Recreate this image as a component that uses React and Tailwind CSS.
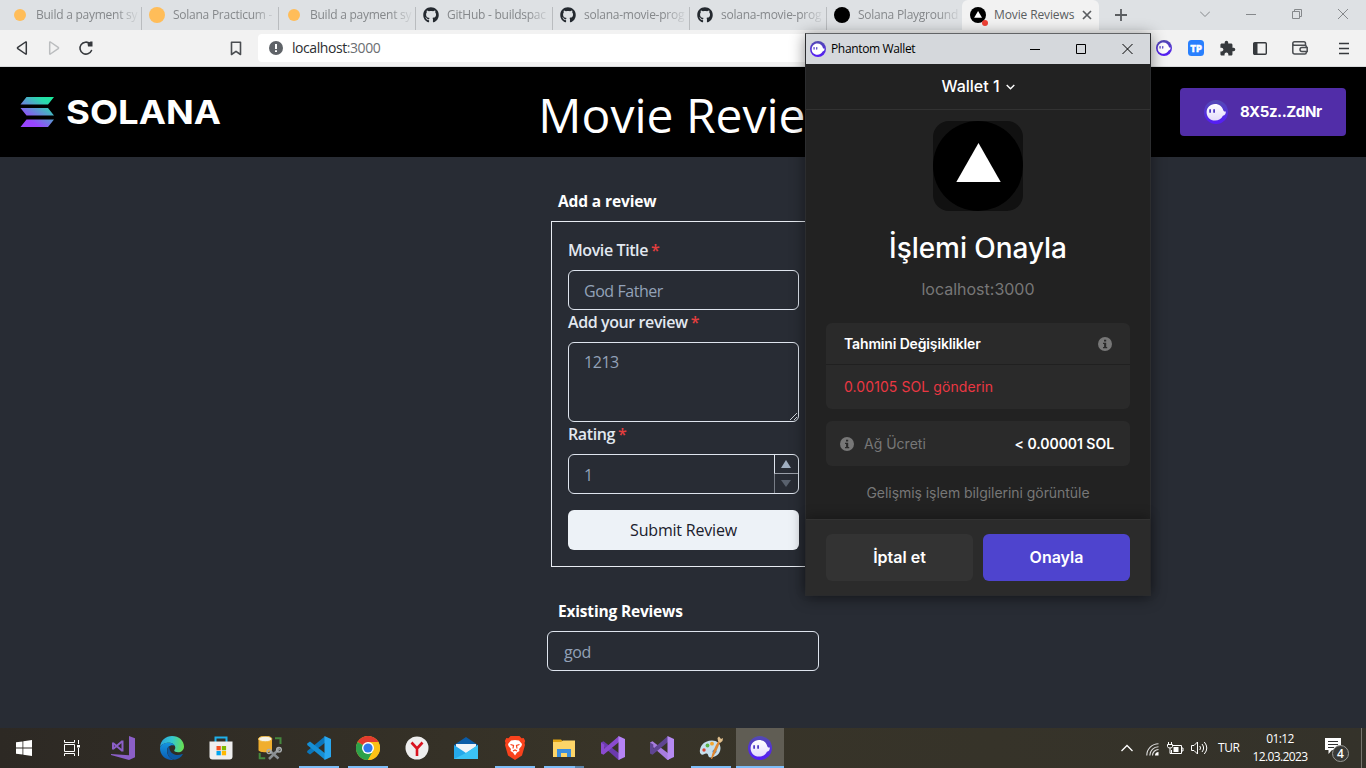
import React from "react";
import { FaGithub } from "react-icons/fa";
import { MdExtension } from "react-icons/md";

const SEG = "font-['Open_Sans','Noto_Sans',sans-serif]";

function Ghost({ size, id, flat }) {
  return (
    <svg width={size} height={size} viewBox="0 0 24 24" className="shrink-0">
      <defs>
        <linearGradient id={id} x1="0" y1="0" x2="0" y2="1">
          <stop offset="0" stopColor="#534bb1" />
          <stop offset="1" stopColor="#551bf9" />
        </linearGradient>
        <linearGradient id={id + "w"} x1="0" y1="0" x2="0" y2="1">
          <stop offset="0" stopColor="#fff" />
          <stop offset="1" stopColor={flat ? "#e4dcfb" : "#fff"} />
        </linearGradient>
      </defs>
      <circle cx="12" cy="12" r="12" fill={`url(#${id})`} />
      <path
        d="M11 3.900c4.300 0 7.300 2.600 8.300 6.300.3 1 .8 1.300 2.500 1.200.2 2.200-.8 4-2.900 4.400-1.300 3-4.300 4.800-7.900 4.800-4.900 0-8.400-3.600-8.400-8.300S6.100 3.900 11 3.900Z"
        fill={`url(#${id}w)`}
      />
      <rect x="5.200" y="9" width="1.800" height="4" rx=".9" fill="#4e3bc4" />
      <rect x="9.200" y="9" width="1.800" height="4" rx=".9" fill="#4e3bc4" />
    </svg>
  );
}

function Triangle({ size }) {
  return (
    <svg width={size} height={size} viewBox="0 0 90 90" className="shrink-0">
      <circle cx="45" cy="45" r="45" fill="#000" />
      <path d="M45.500 22 67.700 61H23.300Z" fill="#fff" />
    </svg>
  );
}

function Dot({ size }) {
  return (
    <svg width={size} height={size} viewBox="0 0 16 16">
      <circle cx="8" cy="8" r="8" fill="#ffbd59" />
    </svg>
  );
}

const github = <FaGithub size={16} color="#24292f" />;

const tabs = [
  { t: "Build a payment sy", i: <Dot size={12} /> },
  { t: "Solana Practicum -", i: <Dot size={16} /> },
  { t: "Build a payment sy", i: <Dot size={12} /> },
  { t: "GitHub - buildspac", i: github },
  { t: "solana-movie-prog", i: github },
  { t: "solana-movie-prog", i: github },
  {
    t: "Solana Playground",
    i: (
      <svg width="16" height="16">
        <circle cx="8" cy="8" r="8" />
      </svg>
    ),
  },
];

function TabBar() {
  return (
    <div className="flex h-[30px] shrink-0 bg-[#dee1e4] pl-1 text-[12px]">
      {tabs.map((t, n) => (
        <div key={n} className="flex h-full w-[137px] shrink-0 items-center">
          <div className="flex w-8 shrink-0 justify-center">{t.i}</div>
          <div className="w-[104px] shrink-0 tracking-[-0.250px] whitespace-nowrap text-[#85888b] [mask-image:linear-gradient(to_right,#000_80px,transparent_104px)]">
            {t.t}
          </div>
          <div className={n < 6 ? "mt-[7px] ml-[1px] h-[23px] w-px shrink-0 bg-[#b9bcbf]" : "hidden"} />
        </div>
      ))}
      <div className="-ml-px flex h-full w-[137px] items-center rounded-t-md bg-[#f2f2f2] pl-2 text-[#5a5d60]">
        <div className="relative h-4 w-4">
          <Triangle size={16} />
          <span className="absolute top-[13px] left-[12px] h-[6px] w-[6px] rounded-full bg-[#ee4035]" />
        </div>
        <span className="ml-2 w-[84px] tracking-[-0.120px] whitespace-nowrap">Movie Reviews</span>
        <svg width="10" height="10" viewBox="0 0 10 10" className="ml-[4px]">
          <path d="M1 1l8 8M9 1l-8 8" stroke="#5a5d60" strokeWidth="1.700" />
        </svg>
      </div>
      <svg width="12" height="12" viewBox="0 0 12 12" className="mt-[9px] ml-4">
        <path d="M6 0v12M0 6h12" stroke="#5a5d60" strokeWidth="1.800" />
      </svg>
      <div className="mt-[9px] mr-[18px] ml-auto flex items-center gap-9 self-start text-[#85888b]">
        <svg width="10" height="10" viewBox="0 0 10 10" fill="none" stroke="currentColor">
          <path d="M0 2.500 5 7.500 10 2.500" />
        </svg>
        <svg width="10" height="10" viewBox="0 0 10 10" stroke="currentColor">
          <path d="M0 5.500h10" />
        </svg>
        <svg width="10" height="10" viewBox="0 0 10 10" fill="none" stroke="currentColor">
          <path d="M.5 2.500h7v7h-7zM2.500 2.500v-2h7v7h-2" />
        </svg>
        <svg width="10" height="10" viewBox="0 0 10 10" stroke="currentColor">
          <path d="M0 0l10 10M10 0 0 10" />
        </svg>
      </div>
    </div>
  );
}

function Toolbar() {
  return (
    <div className="flex h-[37px] shrink-0 items-center border-b border-[#d8dadc] bg-[#f2f2f2]">
      <svg width="80" height="18" viewBox="0 0 80 18" fill="none" strokeWidth="1.500" strokeLinejoin="round" className="ml-4">
        <path d="M10.300 3.300v11.400c0 .5-.3.600-.7.300L1.800 9.600q-.7-.6 0-1.200L9.600 3c.4-.3.700-.2.700.3Z" stroke="#36393d" />
        <path d="M33.700 3.300v11.400c0 .5.300.6.700.3l7.800-5.400q.7-.6 0-1.200L34.400 3c-.4-.3-.7-.2-.7.3Z" stroke="#bbbdbf" />
        <path d="M75.500 11.500A6 6 0 1 1 74 4.700" stroke="#36393d" strokeWidth="1.600" strokeLinecap="round" />
        <path d="M76.500 2.500v5h-4.500l-.5-3.300 3-1.700Z" fill="#36393d" />
      </svg>
      <svg width="12" height="15" viewBox="0 0 12 15" fill="none" className="ml-[134px]">
        <path d="M1.500 1.200h9v12.300L6 10.400l-4.500 3.100Z" stroke="#4a4d51" strokeWidth="1.600" strokeLinejoin="round" />
      </svg>
      <div className="ml-[16px] flex h-7 w-[860px] items-center rounded bg-white pl-[11px] text-[14px]">
        <svg width="14" height="14" viewBox="0 0 14 14">
          <circle cx="7" cy="7" r="7" fill="#5f6368" />
          <path d="M7 3v5M7 9.300v1.800" stroke="#fff" strokeWidth="2" />
        </svg>
        <span className="-mt-px ml-[9px] tracking-[-0.430px] text-[#2c2e31]">
          localhost<span className="text-[#6b6e72]">:3000</span>
        </span>
      </div>
      <div className="ml-[38px] flex items-center">
        <Ghost size={16} id="g1" />
        <svg width="16" height="16" viewBox="0 0 16 16" className="ml-4">
          <rect width="16" height="16" rx="3.500" fill="#2980fe" />
          <text x="8" y="11.500" fontSize="9.500" fontWeight="900" textAnchor="middle" fill="#fff" stroke="#fff" strokeWidth=".4" fontFamily="Inter" textLength="11.500" lengthAdjust="spacingAndGlyphs">TP</text>
        </svg>
        <MdExtension size={17} color="#36393d" className="ml-[15px]" />
        <svg width="14" height="13" viewBox="0 0 14 13" className="ml-[17px]">
          <rect x=".7" y=".7" width="12.600" height="11.600" rx="1" fill="none" stroke="#36393d" strokeWidth="1.400" />
          <path d="M1 1h3.500v11H1z" fill="#36393d" />
        </svg>
        <svg width="16" height="14" viewBox="0 0 16 14" fill="none" stroke="#4a4d51" strokeWidth="1.500" className="ml-[25px]">
          <path d="M13.500 4.500v-2Q13.500.8 12 .8H2.500Q.8.800.8 2.500v8.500q0 2 2 2h10q1.500 0 1.500-1.500v-6q0-1.300-1.500-1.300H2.500Q.8 4.200.8 2.500" />
          <path d="M15.200 6.500H10a2 2 0 0 0 0 4h5.200Z" fill="#f2f2f2" />
        </svg>
        <svg width="10" height="13" viewBox="0 0 10 13" className="ml-[31px]">
          <path d="M0 1.500h10M0 6.500h10M0 11.500h10" stroke="#36393d" strokeWidth="1.500" />
        </svg>
      </div>
    </div>
  );
}

function SiteHeader() {
  return (
    <header className="flex h-[90px] shrink-0 items-center justify-between bg-black px-5">
      <svg width="204" height="32" viewBox="0 0 204 32">
        <defs>
          <linearGradient id="sol" gradientUnits="userSpaceOnUse" x1="32" y1="-2" x2="8" y2="34">
            <stop offset="0" stopColor="#14f195" />
            <stop offset=".25" stopColor="#2ad9ae" />
            <stop offset=".8" stopColor="#9945ff" />
          </linearGradient>
        </defs>
        <path d="M6.500 1h27.500l-6 7.500H.5ZM.5 12h27.500l6 7.500H6.500ZM6.500 23.500H34l-6 7.500H.5Z" fill="url(#sol)" />
        <text x="46" y="28" fontFamily="Inter" fontWeight="700" fontSize="33" fill="#fff" textLength="155" lengthAdjust="spacingAndGlyphs">SOLANA</text>
      </svg>
      <h1 className="pt-1.5 text-[48px] leading-none whitespace-nowrap text-white">Movie Reviews</h1>
      <button className="flex h-12 w-[166px] items-center rounded bg-[#512da8] pl-6 font-[Inter,sans-serif] text-[15px] font-bold text-white">
        <Ghost size={24} id="g2" flat />
        <span className="ml-3 tracking-[-0.400px]">8X5z..ZdNr</span>
      </button>
    </header>
  );
}

const Label = ({ children }) => (
  <label className="flex h-6 items-center text-[16px] font-semibold tracking-[-0.400px] text-[#e2e8f0]">
    {children}
    <span className="ml-[3px] text-[#e53e3e]">*</span>
  </label>
);

function Reviews() {
  const field = "rounded-md border border-[#dfe5ee] text-[16px] tracking-[-0.450px] text-[#93a2b8]";
  return (
    <main className="flex min-h-0 flex-1 flex-col items-center bg-[#282c34]">
      <div className="flex w-[272px] flex-col pt-8">
        <h2 className="ml-[11px] h-6 text-[15.500px] leading-6 font-bold tracking-[-0.120px] text-white">Add a review</h2>
        <form className="mx-1 mt-2 flex h-[346px] w-[265px] flex-col border border-[#e8ecf2] px-4 pt-[16px]">
          <Label>Movie Title</Label>
          <div className={`mt-2 flex h-10 items-center px-[15px] pt-0.5 ${field}`}>God Father</div>
          <Label>Add your review</Label>
          <div className={`relative mt-2 h-20 px-[15px] pt-[7px] ${field}`}>
            1213
            <svg width="9" height="9" viewBox="0 0 9 9" className="absolute right-0 bottom-0">
              <path d="M1 8 8 1M5 8l3-3" stroke="#d0d4da" />
            </svg>
          </div>
          <Label>Rating</Label>
          <div className="mt-2 flex h-10 shrink-0 rounded-md border border-[#dfe5ee] pl-[15px] text-[16px] text-[#93a2b8]">
            <span className="flex-1 pt-2 leading-6">1</span>
            <div className="flex w-6 flex-col">
              <div className="flex h-[19px] items-center justify-center border-b border-l border-b-[#9a9fa8] border-l-[#dfe5ee] pr-px">
                <svg width="10" height="8" viewBox="0 0 10 8">
                  <path d="M5 0l5 8H0Z" fill="#a0aec0" />
                </svg>
              </div>
              <div className="flex h-[19px] items-center justify-center border-l border-[#787d86] pr-px">
                <svg width="10" height="7" viewBox="0 0 10 7">
                  <path d="M5 7l5-7H0Z" fill="#59616d" />
                </svg>
              </div>
            </div>
          </div>
          <button type="button" className="mt-4 h-10 shrink-0 rounded-md bg-[#edf2f7] text-[16px] font-medium tracking-[-0.200px] text-[#1a202c]">
            Submit Review
          </button>
        </form>
        <h2 className="mt-8 ml-[11px] h-6 text-[15.500px] leading-6 font-bold tracking-[-0.180px] text-white">Existing Reviews</h2>
        <div className={`mt-2 flex h-10 items-center px-4 pt-0.5 ${field}`}>god</div>
      </div>
    </main>
  );
}

const Info = () => (
  <svg width="14" height="14" viewBox="0 0 14 14">
    <circle cx="7" cy="7" r="7" fill="#777" />
    <path d="M6 2.700h2.200v1.900H6zM5 5.700h3.200v4.200h1v1.300H5V9.900h1.100V7H5z" fill="#2a2a2a" />
  </svg>
);

function WalletWindow() {
  return (
    <div className="absolute top-[33px] left-[805px] flex h-[563px] w-[346px] flex-col border border-[#2c2d2f] border-t-[#626466] bg-[#222] font-[Inter,sans-serif] text-white shadow-[0_2px_14px_rgba(0,0,0,0.45)]">
      <div className="flex h-[30px] shrink-0 items-center bg-[#d5d8dc] pl-1 text-black">
        <Ghost size={16} id="g3" />
        <span className={`ml-[5px] text-[12px] tracking-[-0.350px] ${SEG}`}>Phantom Wallet</span>
        <svg width="103" height="12" viewBox="0 0 103 12" fill="none" stroke="#000" className="mr-[17px] mb-px ml-auto">
          <path d="M0 6.500h10M46.500 1.500h9v9h-9zM92.500 1l10 10M102.500 1l-10 10" />
        </svg>
      </div>
      <div className="flex h-[46px] shrink-0 items-center justify-center border-b border-[#323232] pb-0.5 text-[16px] font-medium">
        <span>Wallet 1</span>
        <svg width="9" height="6" viewBox="0 0 9 6" fill="none" className="mt-0.5 ml-1.5">
          <path d="M.7 1 4.500 4.700 8.300 1" stroke="#fff" strokeWidth="1.400" />
        </svg>
      </div>
      <div className="flex min-h-0 flex-1 flex-col items-center px-5 pt-[11px]">
        <div className="h-[90px] w-[90px] shrink-0 overflow-hidden rounded-[16px] bg-[#111]">
          <Triangle size={90} />
        </div>
        <div className="mt-[20px] text-[28px] leading-[34px] font-medium tracking-[-0.050px]">İşlemi Onayla</div>
        <div className="mt-[14px] text-[16px] leading-5 text-[#777]">localhost:3000</div>
        <div className="mt-[24px] w-full shrink-0 rounded-md bg-[#2a2a2a] text-[14px]">
          <div className="flex h-[42px] items-center justify-between border-b border-[#202020] px-[18px] font-semibold">
            <span className="tracking-[-0.150px]">Tahmini Değişiklikler</span>
            <Info />
          </div>
          <div className="flex h-[44px] items-center px-[18px] pb-0.5 tracking-[0.080px] text-[#eb3742]">0.00105 SOL gönderin</div>
        </div>
        <div className="mt-3 flex h-[45px] w-full shrink-0 items-center rounded-md bg-[#2a2a2a] pr-4 pl-3.5 text-[14px]">
          <Info />
          <span className="ml-2.5 text-[#777]">Ağ Ücreti</span>
          <span className="ml-auto font-semibold tracking-[-0.050px]">&lt; 0.00001 SOL</span>
        </div>
        <div className="mt-[17px] text-[14px] leading-5 tracking-[-0.050px] text-[#777]">Gelişmiş işlem bilgilerini görüntüle</div>
      </div>
      <div className="flex h-[76px] shrink-0 gap-2.5 border-t border-[#323232] bg-[#2b2b2b] px-5 pt-3.5 text-[16px] font-semibold shadow-[0_-4px_10px_rgba(0,0,0,0.25)]">
        <button className="h-[47px] flex-1 rounded-md bg-[#333] pb-0.5">İptal et</button>
        <button className="h-[47px] flex-1 rounded-md bg-[#4e44ce] pb-0.5">Onayla</button>
      </div>
    </div>
  );
}

const S = ({ children }) => (
  <svg width="24" height="24" viewBox="0 0 24 24" fill="none">
    {children}
  </svg>
);

const VisualStudio = ({ a, b, c }) => (
  <S>
    <path d="M0 6.500 2.500 5.200 19 18v5.500L17.500 24 0 8.500Z" fill={a} />
    <path d="M0 17.500 2.500 18.800 18 6V0L0 15.500ZM0 6.500v11l3.300-2V8.500Z" fill={b} />
    <path d="M17.500 0 24 3v18l-6.500 3Z" fill={c} />
  </S>
);

const icons = {
  vsInstaller: (
    <S>
      <path d="M18 0l6 2.200v19L18 24 0 19v-1l18 1.200Z" fill="#8b5fc7" />
      <path d="M2 6.500v7M11.500 4.500v11M2 7l9.500 8M2 13l9.500-8" stroke="#8b5fc7" strokeWidth="2" />
    </S>
  ),
  edge: (
    <S>
      <defs>
        <linearGradient id="e1" x1="0" y1=".3" x2="1" y2=".4">
          <stop offset="0" stopColor="#2aa5dd" />
          <stop offset=".5" stopColor="#34c8cf" />
          <stop offset="1" stopColor="#68e052" />
        </linearGradient>
        <linearGradient id="e2" x1="0" y1="0" x2="0" y2="1">
          <stop offset="0" stopColor="#1494df" />
          <stop offset="1" stopColor="#0b5cb4" />
        </linearGradient>
      </defs>
      <path d="M0 11.500C.5 4 6 0 12 0c7 0 12 4.800 12 10.500 0 3.500-2.700 5.800-6 5.800-2 0-3.800-.8-3.800-1.700 0-.7 1.100-1.200 1.100-3 0-2.500-2.700-4.800-6.300-4.800C5 6.800 1 8.300 0 11.500Z" fill="url(#e1)" />
      <path d="M0 12C.5 8.500 4.500 6.800 9 6.800c2.500 0 5 1.200 6 3-4.500-1.500-8 1-8 5 0 4.500 3 7.700 6.500 9.100C5.500 24.700 0 19 0 12Z" fill="url(#e2)" />
      <path d="M9.200 10.500C7 12 7 15 7.500 17c1 4 4 6.800 7.500 6.700 3-.5 6-2.500 7.700-5.200.3-.5-.1-.8-.6-.5-5 2.500-12.900.5-12.900-7.500Z" fill="#0c59a4" />
    </S>
  ),
  store: (
    <S>
      <path d="M6.500 6V1.500h11V6" stroke="#1fb0ea" strokeWidth="2" />
      <path d="M.5 5.500h23v15q0 3-3 3h-17q-3 0-3-3Z" fill="#eee" />
      <path d="M7.500 10h4.300v4.300H7.500z" fill="#f25022" />
      <path d="M12.800 10h4.300v4.300h-4.300z" fill="#7fba00" />
      <path d="M7.500 15h4.300v4.300H7.500z" fill="#00a4ef" />
      <path d="M12.800 15h4.300v4.300h-4.300z" fill="#ffb900" />
    </S>
  ),
  ssms: (
    <S>
      <path d="M.5 3v11c0 3 13.500 3 13.500 0V3" fill="#f0ae2e" />
      <ellipse cx="7.200" cy="3" rx="6.700" ry="2.800" fill="#f4f1e6" stroke="#f0b73c" />
      <path d="M17 2.300h5.500V8M1.700 17v5.300h5.500" stroke="#45883e" strokeWidth="2" />
      <path d="M11 23 21.500 12.500M12 15l8.500 7.500" stroke="#8a8f92" strokeWidth="2.500" />
      <circle cx="21" cy="13.800" r="2.300" stroke="#a9adaf" strokeWidth="1.500" />
      <circle cx="11" cy="15.500" r="2" stroke="#a9adaf" strokeWidth="1.300" />
    </S>
  ),
  vscode: (
    <S>
      <path d="M18 .3v6.500L3 18.500l-2.800-2v-1.400Z" fill="#0b76bb" />
      <path d="M18 23.700v-6.500L3 5.500l-2.800 2v1.400Z" fill="#168fd5" />
      <path d="M17.500 0 24 3v18l-6.500 3Z" fill="#29a7ef" />
    </S>
  ),
  chrome: (
    <S>
      <circle cx="12" cy="12" r="12" fill="#fbc116" />
      <path d="M12 12 1.600 6A12 12 0 0 1 22.400 6Z" fill="#e33b2e" />
      <path d="M1.600 6a12 12 0 0 0 10.400 18l5.200-9L12 12Z" fill="#2da14b" />
      <path d="M12 6h10.400A12 12 0 0 1 12 24l5.200-9Z" fill="#fbc116" />
      <circle cx="12" cy="12" r="6" fill="#fff" />
      <circle cx="12" cy="12" r="4.600" fill="#3078ed" />
    </S>
  ),
  yandex: (
    <S>
      <circle cx="12" cy="12" r="11.500" fill="#eee" />
      <path d="M6.500 6.500 12 12.500l5.500-6M12 12v8" stroke="#d9131f" strokeWidth="2.600" />
    </S>
  ),
  mail: (
    <S>
      <path d="M0 9 12 1l12 8v2H0Z" fill="#0a5ca8" />
      <path d="M2 8h20v9H2Z" fill="#eff3f8" />
      <path d="M0 9l12 8 12-8v14H0Z" fill="#25a9eb" />
      <path d="M24 9v14H0L12 17Z" fill="#3bc3f5" />
    </S>
  ),
  brave: (
    <S>
      <path d="M7.500 0h9l2 2.300 2.200-.3 1.500 3-.7 2 .5 2-3 10.500L12 24l-7-4.500L2 9l.5-2-.7-2 1.500-3 2.200.3Z" fill="#f9421c" />
      <path d="M8 4.500 12 4l4 .5 3 3.500-.5 2-2.500 3 .5 2-2.500 1.500L12 19.500l-2-3L7.500 15l.5-2-2.500-3L5 8Z" fill="#fff" />
      <path d="M7.500 8.500l3 1-.5 3M16.500 8.500l-3 1 .5 3M10 15l2-1 2 1" stroke="#f9421c" strokeWidth="1.200" />
    </S>
  ),
  explorer: (
    <S>
      <path d="M1 3.500h8l2 2H23V21H1Z" fill="#e0a312" />
      <path d="M1 6h8l2-1.500h12V21H1Z" fill="#fdd568" />
      <path d="M5 21v-8h14v8h-4v-4H9v4Z" fill="#3b8ede" />
    </S>
  ),
  paint: (
    <S>
      <path d="M13 4.500c5 0 8.500 3 8.500 7.500 0 6-5 9.500-10 9.500-3 0-1.500-3.500-4-4-2.500-.3-3 2-5 1C0 17 .5 12.500 3 9c2-2.800 6-4.500 10-4.500Z" fill="#c5dfee" />
      <circle cx="8.500" cy="9.500" r="1.900" fill="#5ab347" />
      <circle cx="13" cy="7.700" r="1.900" fill="#f3a52f" />
      <circle cx="5" cy="14" r="1.700" fill="#d94632" />
      <circle cx="15.500" cy="15.500" r="2" fill="#3686cd" />
      <path d="M12 23c1-6 4-13 7.500-18l1.500 1c-2 6-5 12-8 17Z" fill="#dd8632" />
      <path d="M19 5l-.5-3L20 .5 22 3l2-1-.5 3-2.500 2Z" fill="#e2c08d" />
    </S>
  ),
};

const items = [
  { i: icons.vsInstaller },
  { i: icons.edge },
  { i: icons.store },
  { i: icons.ssms },
  { i: icons.vscode, on: 1 },
  { i: icons.chrome, on: 1 },
  { i: icons.yandex },
  { i: icons.mail },
  { i: icons.brave, on: 1 },
  { i: icons.explorer, on: 2 },
  { i: <VisualStudio a="#6b3aae" b="#8b4bd0" c="#b583f5" /> },
  { i: <VisualStudio a="#a77ce0" b="#5f4592" c="#b68af2" /> },
  { i: icons.paint, on: 1 },
];

function Taskbar() {
  return (
    <div className="flex h-10 shrink-0 bg-[linear-gradient(to_right,#2d2924,#383428_45%,#34322a)]">
      <div className="flex w-12 items-center justify-center">
        <svg width="16" height="16" viewBox="0 0 16 16" fill="#fff">
          <path d="M0 2.300 6.500 1.400v6.200H0ZM7.300 1.300 16 0v7.600H7.300ZM0 8.400h6.500v6.200L0 13.700ZM7.300 8.400H16V16l-8.700-1.300Z" />
        </svg>
      </div>
      <div className="mr-[3px] flex w-12 items-center justify-center">
        <svg width="16" height="16" viewBox="0 0 16 16" fill="none" stroke="#fff">
          <path d="M.5 0v2.500h10V0M.5 4.500h10v7H.5zM.5 16v-2.500h10V16M14.500 0v4M14.500 8v8" />
          <path d="M13 5h3v2.500h-3z" fill="#fff" stroke="none" />
        </svg>
      </div>
      {items.map((it, n) => (
        <div key={n} className="mr-px flex w-12 flex-col items-center">
          <div className="flex h-[38px] items-center pt-0.5">{it.i}</div>
          <div className={it.on ? "flex h-0.5 w-10 justify-end bg-[#7dbdf8]" : "hidden"}>
            <span className={it.on === 2 ? "h-0.5 w-[9px] bg-[#5a83a8]" : "hidden"} />
          </div>
        </div>
      ))}
      <div className="flex w-12 flex-col items-center bg-[#605d54]">
        <div className="flex h-[38px] items-center pt-0.5">
          <Ghost size={24} id="g4" flat />
        </div>
        <div className="h-0.5 w-full bg-[#7dbdf8]" />
      </div>
      <div className="ml-auto flex items-center text-[12px] text-white">
        <svg width="12" height="8" viewBox="0 0 12 8" fill="none" stroke="#fff" strokeWidth="1.300">
          <path d="M.5 7 6 1.500 11.500 7" />
        </svg>
        <svg width="13" height="13" viewBox="0 0 13 13" fill="none" stroke="#ddd" strokeWidth="1.100" className="mt-[3px] ml-[13px]">
          <path d="M.8 12.500A11.700 11.700 0 0 1 12.500.8M3.800 12.500a8.700 8.700 0 0 1 8.700-8.700M6.500 12.500a6 6 0 0 1 6-6" />
          <path d="M9 12.500a3.500 3.500 0 0 1 3.500-3.500v3.500Z" fill="#fff" stroke="none" />
        </svg>
        <svg width="17" height="13" viewBox="0 0 17 13" fill="none" stroke="#fff" className="ml-[8px]">
          <path d="M5.500 3.500h9v8H4.500V8M14.500 6h1.500v3h-1.500M1.500 0v2.500M4.500 0v2.500M.5 2.500h5v2q0 1.500-2.500 1.500T.5 4.500zM3 6v5.500h2" />
          <path d="M6.500 5h5v5h-5z" fill="#fff" stroke="none" />
        </svg>
        <svg width="17" height="14" viewBox="0 0 17 14" fill="none" stroke="#fff" className="ml-[7px]">
          <path d="M.5 4.500h2.500l3.500-3.500v12L3 9.500H.5ZM8.800 5q1.500 2 0 4M11 3q3.200 4 0 8M13.300 1q5 6 0 12" />
        </svg>
        <span className="ml-[10px] w-[23px] tracking-[-0.400px]">TUR</span>
        <div className="ml-3 flex w-[54px] flex-col items-center text-[12px] leading-[18px] tracking-[-0.600px] whitespace-nowrap">
          <span>01:12</span>
          <span>12.03.2023</span>
        </div>
        <svg width="25" height="24" viewBox="0 0 25 24" className="mt-1 ml-[18px]">
          <path d="M0 0h16v12H7l-3.500 4v-4H0Z" fill="#fff" />
          <path d="M3 3.500h10M3 6.500h10M3 9.500h6" stroke="#333" />
          <circle cx="15.500" cy="15.500" r="8" fill="#3a3a37" stroke="#9a9a96" />
          <text x="15.500" y="19.800" fontSize="12" fontWeight="600" textAnchor="middle" fill="#fff">4</text>
        </svg>
        <div className="mr-1 ml-[11px] h-10 w-px bg-[#77756e]" />
      </div>
    </div>
  );
}

export default function App() {
  return (
    <div className={`relative flex h-[768px] w-[1366px] flex-col overflow-hidden ${SEG}`}>
      <TabBar />
      <Toolbar />
      <SiteHeader />
      <Reviews />
      <Taskbar />
      <WalletWindow />
    </div>
  );
}
